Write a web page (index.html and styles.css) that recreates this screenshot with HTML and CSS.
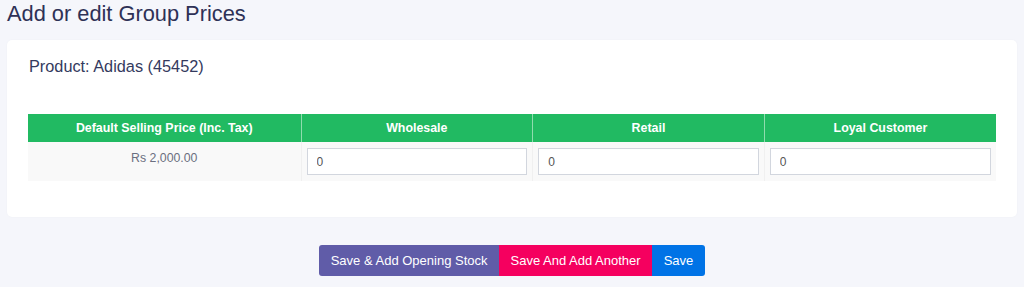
FILE: index.html
```html
<!DOCTYPE html>
<html>
<head>
<meta charset="utf-8">
<link rel="stylesheet" href="styles.css">
</head>
<body>
<h1 class="page-title">Add or edit Group Prices</h1>
<div class="card">
  <div class="product">Product: Adidas (45452)</div>
  <table class="prices">
    <thead>
      <tr>
        <th class="col-default">Default Selling Price (Inc. Tax)</th>
        <th>Wholesale</th>
        <th>Retail</th>
        <th>Loyal Customer</th>
      </tr>
    </thead>
    <tbody>
      <tr>
        <td class="price">Rs 2,000.00</td>
        <td><input class="field" type="text" value="0"></td>
        <td><input class="field" type="text" value="0"></td>
        <td><input class="field" type="text" value="0"></td>
      </tr>
    </tbody>
  </table>
</div>
<div class="actions">
  <button class="btn btn-purple">Save &amp; Add Opening Stock</button><button class="btn btn-red">Save And Add Another</button><button class="btn btn-blue">Save</button>
</div>
</body>
</html>
```
FILE: styles.css
```css
* { box-sizing: border-box; }
body {
  margin: 0;
  background: #f5f6fb;
  font-family: "Liberation Sans", Arial, sans-serif;
  color: #2d3157;
}
.page-title {
  margin: 0;
  padding: 1px 7px 0;
  height: 40px;
  font-size: 21.8px;
  font-weight: normal;
  line-height: 26px;
  color: #2e3156;
}
.card {
  margin: 0 7px;
  background: #fff;
  border-radius: 5px;
  box-shadow: 0 0 2px rgba(0,0,0,0.04);
  padding: 16px 21px 36px;
  height: 177px;
}
.product {
  font-size: 16.3px;
  line-height: 21px;
  padding-left: 1px;
  color: #343a5e;
  margin-bottom: 37px;
}
.prices {
  width: 100%;
  border-collapse: collapse;
  table-layout: fixed;
}
.prices th {
  background: #21ba62;
  color: #fff;
  font-size: 12.4px;
  font-weight: bold;
  height: 28px;
  padding: 0 8px;
  border-left: 1px solid #8fdcae;
  text-align: center;
}
.prices th:first-child { border-left: none; }
.prices th.col-default { width: 273px; }
.prices td {
  background: #f9f9f9;
  border-left: 1px solid #f0f0f0;
  padding: 6px 5px;
  height: 39px;
  vertical-align: top;
}
.prices td:first-child { border-left: none; }
.prices td.price {
  text-align: center;
  color: #6b6f80;
  font-size: 12.3px;
  padding-top: 8px;
  line-height: 16px;
}
.field {
  display: block;
  width: 100%;
  height: 27px;
  border: 1px solid #d2d6de;
  background: #fff;
  padding: 0 9px;
  font-family: "Liberation Sans", Arial, sans-serif;
  font-size: 12px;
  color: #555;
  outline: none;
}
.actions {
  display: flex;
  justify-content: center;
  margin-top: 28px;
}
.btn {
  border: none;
  height: 31px;
  padding: 0 11.5px;
  font-family: "Liberation Sans", Arial, sans-serif;
  font-size: 13px;
  color: #fff;
  cursor: pointer;
}
.btn-purple { background: #605ca8; border-radius: 3px 0 0 3px; }
.btn-red { background: #f5005f; }
.btn-blue { background: #0073e6; border-radius: 0 3px 3px 0; }
```
